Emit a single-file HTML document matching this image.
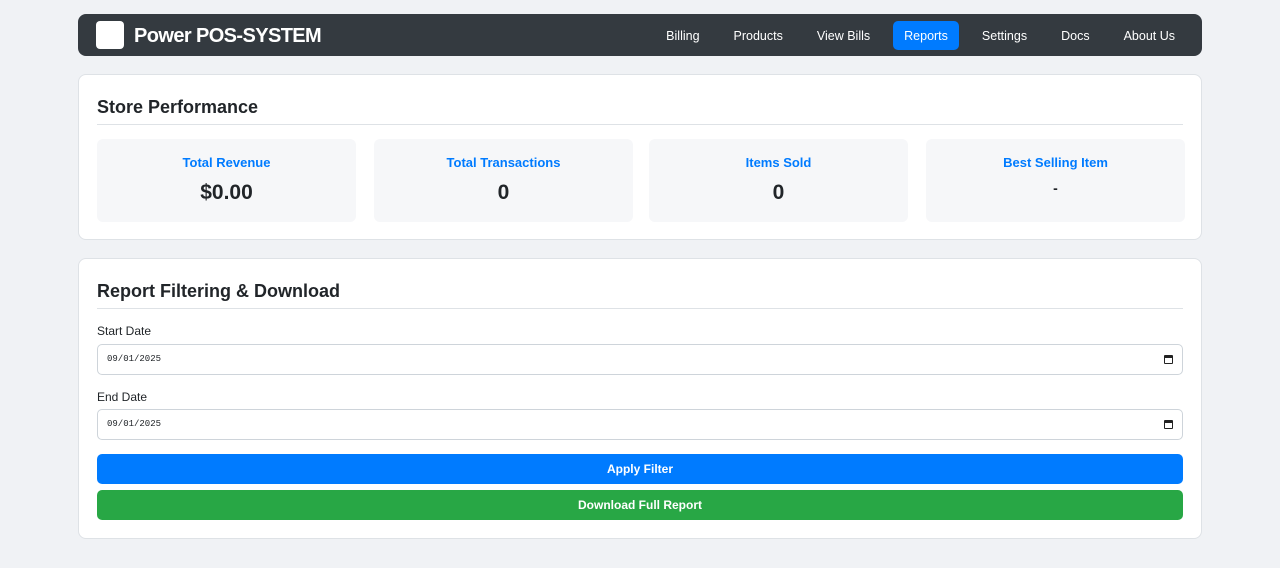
<!DOCTYPE html>
<html><head><meta charset="utf-8"><style>
*{box-sizing:border-box;margin:0;padding:0}
body{width:1280px;height:568px;background:#f0f2f5;font-family:"Liberation Sans",sans-serif;color:#212529;position:relative;overflow:hidden}
.nav{position:absolute;left:78px;top:14px;width:1124px;height:42px;background:#343a40;border-radius:8px}
.logo{position:absolute;left:18px;top:7px;width:28px;height:28px;background:#fff;border-radius:4px}
.brand{position:absolute;left:56px;top:11px;color:#fff;font-weight:bold;font-size:20px;letter-spacing:-0.6px}
.links{position:absolute;right:16px;top:7px;display:flex;gap:0}
.links a{color:#fff;font-size:12.5px;padding:8px 11px 6px;margin-left:12px;border-radius:5px;text-decoration:none;height:29px;line-height:15px}
.links a.act{background:#007bff}
.card{position:absolute;left:78px;width:1124px;background:#fff;border:1px solid #dee2e6;border-radius:8px}
h2{position:absolute;left:18px;font-size:18px;font-weight:bold}
.hr{position:absolute;left:18px;right:18px;height:1px;background:#dee2e6}
.stat{position:absolute;top:64px;width:259px;height:83px;background:#f6f7f9;border-radius:6px;text-align:center}
.stat .l{color:#007bff;font-weight:bold;font-size:13px;margin-top:16px}
.stat .v{font-weight:bold;font-size:21px;margin-top:11px}
label{position:absolute;left:18px;font-size:12px}
.inp{position:absolute;left:18px;right:18px;height:31px;border:1px solid #ced4da;border-radius:5px;font-family:"Liberation Mono",monospace;font-size:9px;padding:9px 9px}
.cal{position:absolute;right:9px;top:10px;width:9px;height:9px;border:1.5px solid #222;border-top-width:3px;border-radius:1px}
.btn{position:absolute;left:18px;right:18px;height:30px;border-radius:5px;color:#fff;font-weight:bold;font-size:12px;text-align:center;line-height:30px}
</style></head><body>
<div class="nav"><div class="logo"></div><div class="brand">Power POS-SYSTEM</div>
<div class="links"><a>Billing</a><a>Products</a><a>View Bills</a><a class="act">Reports</a><a>Settings</a><a>Docs</a><a>About Us</a></div></div>
<div class="card" style="top:74px;height:166px">
<h2 style="top:22px">Store Performance</h2><div class="hr" style="top:49px"></div>
<div class="stat" style="left:18px"><div class="l">Total Revenue</div><div class="v">$0.00</div></div>
<div class="stat" style="left:295px"><div class="l">Total Transactions</div><div class="v">0</div></div>
<div class="stat" style="left:570px"><div class="l">Items Sold</div><div class="v">0</div></div>
<div class="stat" style="left:847px"><div class="l">Best Selling Item</div><div class="v" style="font-size:14px;margin-top:10px">-</div></div>
</div>
<div class="card" style="top:258px;height:281px">
<h2 style="top:22px">Report Filtering &amp; Download</h2><div class="hr" style="top:49px"></div>
<label style="top:65px">Start Date</label>
<div class="inp" style="top:85px">09/01/2025<div class="cal"></div></div>
<label style="top:131px">End Date</label>
<div class="inp" style="top:150px">09/01/2025<div class="cal"></div></div>
<div class="btn" style="top:195px;background:#007bff">Apply Filter</div>
<div class="btn" style="top:231px;background:#28a745">Download Full Report</div>
</div>
</body></html>
